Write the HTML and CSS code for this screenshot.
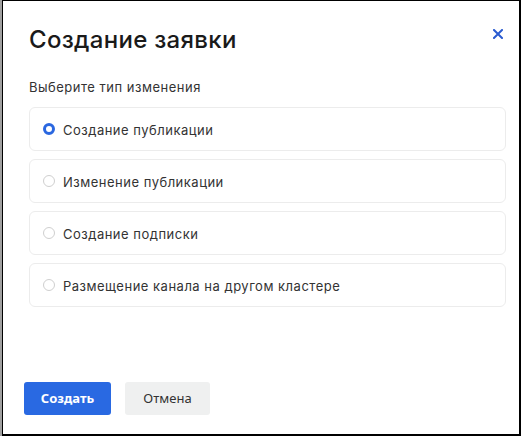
FILE: index.html
```html
<!DOCTYPE html>
<html lang="ru">
<head>
<meta charset="utf-8">
<link rel="stylesheet" href="styles.css">
</head>
<body>
<div class="screen">
  <div class="window">
    <div class="header">
      <h1 class="title">Создание заявки</h1>
      <button class="close" aria-label="Закрыть">
        <svg width="10" height="10" viewBox="0 0 10 10"><path d="M1 1L9 9M9 1L1 9" stroke="#2a5bd0" stroke-width="2" stroke-linecap="square"/></svg>
      </button>
    </div>
    <div class="subtitle">Выберите тип изменения</div>
    <div class="options">
      <label class="option"><span class="radio checked"></span><span class="label">Создание публикации</span></label>
      <label class="option"><span class="radio"></span><span class="label">Изменение публикации</span></label>
      <label class="option"><span class="radio"></span><span class="label">Создание подписки</span></label>
      <label class="option"><span class="radio"></span><span class="label">Размещение канала на другом кластере</span></label>
    </div>
    <div class="footer">
      <button class="btn primary">Создать</button>
      <button class="btn secondary">Отмена</button>
    </div>
  </div>
</div>
</body>
</html>
```
FILE: styles.css
```css
html, body {
  margin: 0;
  padding: 0;
  background: #fff;
}
.screen {
  width: 521px;
  height: 436px;
  box-sizing: border-box;
  border-left: 2px solid #a0a0a0;
}
.window {
  height: 436px;
  box-sizing: border-box;
  border-top: 1px solid #000;
  border-left: 1px solid #000;
  border-right: 2px solid #000;
  border-bottom: 2px solid #000;
  display: flex;
  flex-direction: column;
  font-family: Inter, "Noto Sans", sans-serif;
  color: #333;
}
.header {
  display: flex;
  align-items: flex-start;
  justify-content: space-between;
  padding: 23px 16px 0 26px;
}
.title {
  margin: 0;
  font-family: Inter, "Noto Sans", sans-serif;
  font-weight: 500;
  font-size: 24px;
  line-height: 32px;
  letter-spacing: 0.3px;
  color: #1a1a1a;
}
.close {
  margin-top: 5px;
  border: none;
  background: none;
  padding: 0;
  width: 10px;
  height: 10px;
  display: flex;
}
.subtitle {
  padding: 22px 0 0 26px;
  font-size: 13px;
  line-height: 18px;
  letter-spacing: 0.5px;
  color: #333;
}
.options {
  display: flex;
  flex-direction: column;
  gap: 8px;
  padding: 11px 13px 0 26px;
}
.option {
  display: flex;
  align-items: center;
  gap: 8px;
  height: 44px;
  box-sizing: border-box;
  padding-left: 13px;
  border: 1px solid #ececec;
  border-radius: 6px;
  font-size: 13px;
  letter-spacing: 0.5px;
  color: #333;
}
.label {
  padding-top: 1px;
}
.radio {
  width: 12px;
  height: 12px;
  box-sizing: border-box;
  border-radius: 50%;
  border: 1.5px solid #cfcfcf;
  background: #fff;
  flex: none;
}
.radio.checked {
  border: 3.5px solid #2a67e0;
}
.footer {
  margin-top: auto;
  display: flex;
  gap: 14px;
  padding: 0 0 19px 21px;
}
.btn {
  height: 33px;
  border: none;
  border-radius: 3px;
  font-family: "Noto Sans", sans-serif;
  font-size: 13px;
  padding: 0 0 2px 0;
}
.primary {
  width: 87px;
  background: #2969e2;
  color: #fff;
  font-weight: 700;
}
.secondary {
  width: 85px;
  background: #eff0f0;
  color: #333;
}
```
